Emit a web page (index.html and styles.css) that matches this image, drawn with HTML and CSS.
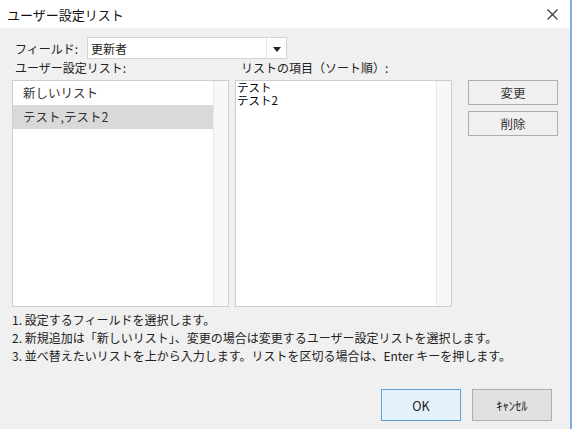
FILE: index.html
```html
<!DOCTYPE html>
<html lang="ja">
<head>
    <meta charset="UTF-8">
    <title>ユーザー設定リスト</title>
    <link rel="stylesheet" href="styles.css">
</head>
<body>
<div class="dialog">
    <div class="titlebar">
        <span class="title">ユーザー設定リスト</span>
        <svg class="close" width="11" height="11" viewBox="0 0 11 11">
            <path d="M0.5 0.5 L10.5 10.5 M10.5 0.5 L0.5 10.5" stroke="#333" stroke-width="1.1" fill="none"/>
        </svg>
    </div>
    <div class="content">
        <div class="field-row">
            <span class="field-label">フィールド:</span>
            <div class="select">
                <span class="select-value">更新者</span>
                <span class="select-arrow"></span>
            </div>
        </div>
        <div class="labels">
            <span class="label-left">ユーザー設定リスト:</span>
            <span class="label-right">リストの項目（ソート順）:</span>
        </div>
        <div class="lists">
            <div class="listbox">
                <div class="list-items">
                    <div class="list-item">新しいリスト</div>
                    <div class="list-item selected">テスト,テスト2</div>
                </div>
                <div class="scrollbar"></div>
            </div>
            <div class="listbox">
                <div class="text-items">
                    <div class="text-line">テスト</div>
                    <div class="text-line">テスト2</div>
                </div>
                <div class="scrollbar"></div>
            </div>
            <div class="side-buttons">
                <button class="btn">変更</button>
                <button class="btn">削除</button>
            </div>
        </div>
        <div class="help">
            <p>1. 設定するフィールドを選択します。</p>
            <p>2. 新規追加は「新しいリスト」、変更の場合は変更するユーザー設定リストを選択します。</p>
            <p>3. 並べ替えたいリストを上から入力します。リストを区切る場合は、Enter キーを押します。</p>
        </div>
        <div class="footer">
            <button class="btn-main ok">OK</button>
            <button class="btn-main">ｷｬﾝｾﾙ</button>
        </div>
    </div>
</div>
</body>
</html>
```

FILE: styles.css
```css
body {
    margin: 0;
    padding: 0;
    font-family: "Noto Sans CJK JP", "Noto Sans", sans-serif;
    font-size: 12px;
    color: #222;
    background-color: #f0f0f0;
}
.dialog {
    width: 570px;
    height: 429px;
    border-right: 2px solid #7fb0e0;
    background-color: #f0f0f0;
}
.titlebar {
    height: 28px;
    background-color: white;
    display: flex;
    align-items: center;
    justify-content: space-between;
    padding: 0 12px 0 7px;
}
.title {
    font-size: 13px;
    color: #111;
}
.close {
    display: block;
}
.content {
    padding: 0 12px;
}
.field-row {
    display: flex;
    align-items: center;
    margin-top: 9px;
    height: 22px;
}
.field-label {
    width: 72px;
    padding-left: 3px;
}
.select {
    width: 198px;
    height: 20px;
    border: 1px solid #d4d4d4;
    background-color: white;
    display: flex;
    align-items: center;
}
.select-value {
    flex: 1;
    padding-left: 3px;
}
.select-arrow {
    width: 19px;
    height: 20px;
    border-left: 1px solid #e4e4e4;
    display: flex;
    align-items: center;
    justify-content: center;
}
.select-arrow::after {
    content: "";
    border-left: 4px solid transparent;
    border-right: 4px solid transparent;
    border-top: 5px solid #222;
    margin-top: 2px;
}
.labels {
    display: flex;
    height: 17px;
    line-height: 17px;
}
.label-left {
    width: 226px;
    padding-left: 3px;
}
.lists {
    display: flex;
    margin-top: 4px;
    height: 227px;
}
.listbox {
    width: 215px;
    height: 225px;
    border: 1px solid #cdcdcd;
    background-color: white;
    display: flex;
    margin-right: 6px;
}
.list-items {
    flex: 1;
}
.list-item {
    height: 24px;
    line-height: 24px;
    padding-left: 10px;
    color: #333;
    font-size: 12.5px;
}
.list-item.selected {
    background-color: #d9d9d9;
}
.text-items {
    flex: 1;
    padding-left: 1px;
    font-size: 11.5px;
    color: #000;
}
.text-line {
    line-height: 13px;
}
.scrollbar {
    width: 14px;
    background-color: #f8f8f8;
    border-left: 1px solid #e8e8e8;
}
.side-buttons {
    display: flex;
    flex-direction: column;
    gap: 6px;
    margin-left: 10px;
}
.btn {
    width: 90px;
    height: 25px;
    border: 1px solid #adadad;
    background-color: #f0f0f0;
    font-family: inherit;
    font-size: 12.5px;
    color: #333;
    padding: 0;
}
.help {
    margin-top: 4px;
}
.help p {
    margin: 0;
    height: 18px;
    line-height: 18px;
    color: #222;
}
.footer {
    display: flex;
    justify-content: flex-end;
    gap: 11px;
    margin-top: 24px;
    padding-right: 6px;
}
.btn-main {
    width: 80px;
    height: 32px;
    border: 1px solid #adadad;
    background-color: #e1e1e1;
    font-family: inherit;
    font-size: 12.5px;
    color: #222;
    padding: 0;
}
.btn-main.ok {
    background-color: #e5f1fb;
    border-color: #5aa0dc;
}
```
